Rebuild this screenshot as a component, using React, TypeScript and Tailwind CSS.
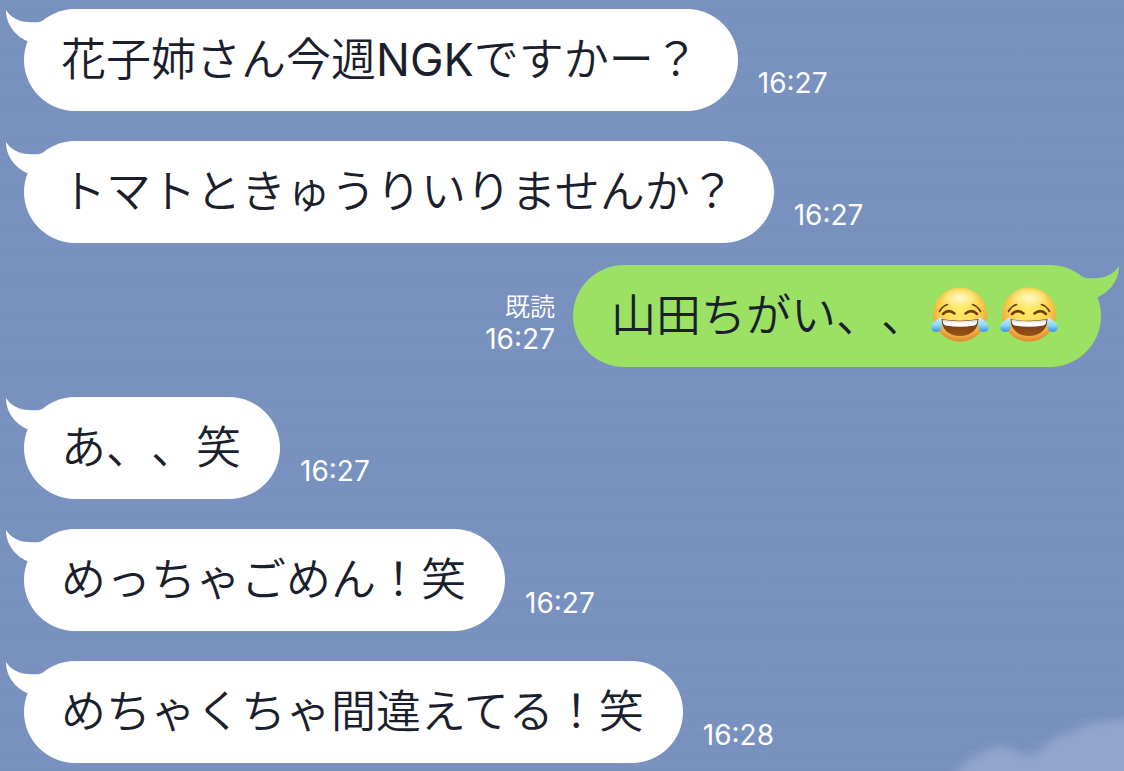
import type { ReactNode } from 'react';

function Tail({ side }: { side: 'left' | 'right' }) {
  return (
    <svg
      aria-hidden="true"
      viewBox="0 0 40 40"
      className={
        side === 'left'
          ? 'absolute top-0 -left-[18px] size-10 fill-white'
          : 'absolute top-0 -right-[18px] size-10 -scale-x-100 fill-[#9be164]'
      }
    >
      <path d="M0 1C5 9 14 13.500 27 13.200Q34 13.500 36 12L40 32H21C10 27 0 16 0 1Z" />
    </svg>
  );
}

function JoyEmoji({ id }: { id: string }) {
  return (
    <svg role="img" aria-label="😂" viewBox="0 0 58 58" className="size-[58px] shrink-0">
      <defs>
        <radialGradient id={`${id}-face`} cx="0.5" cy="0.38" r="0.64">
          <stop offset="0" stopColor="#feec68" />
          <stop offset="0.5" stopColor="#fcdb55" />
          <stop offset="0.8" stopColor="#f3ae40" />
          <stop offset="1" stopColor="#de7d2a" />
        </radialGradient>
        <radialGradient id={`${id}-shine`} cx="0.5" cy="0.5" r="0.5">
          <stop offset="0" stopColor="#fffbd0" stopOpacity="0.95" />
          <stop offset="1" stopColor="#fffbd0" stopOpacity="0" />
        </radialGradient>
        <linearGradient id={`${id}-mouth`} x1="0" y1="0" x2="0" y2="1">
          <stop offset="0" stopColor="#6b3410" />
          <stop offset="1" stopColor="#965418" />
        </linearGradient>
        <linearGradient id={`${id}-teeth`} x1="0" y1="0" x2="0" y2="1">
          <stop offset="0" stopColor="#c8c0ba" />
          <stop offset="0.5" stopColor="#ffffff" />
        </linearGradient>
        <linearGradient id={`${id}-tear`} x1="0" y1="0" x2="0" y2="1">
          <stop offset="0" stopColor="#d3f3ff" />
          <stop offset="0.55" stopColor="#8fd6fb" />
          <stop offset="1" stopColor="#2f93e6" />
        </linearGradient>
      </defs>
      <circle cx="29" cy="27.500" r="27" fill={`url(#${id}-face)`} />
      <ellipse cx="29" cy="11" rx="19" ry="10" fill={`url(#${id}-shine)`} />
      <g fill="none" stroke="#6e3b0c" strokeLinecap="round">
        <path d="M8.500 24.500Q11.500 19 16.500 17.500" strokeWidth="1.600" />
        <path d="M49.500 24.500Q46.500 19 41.500 17.500" strokeWidth="1.600" />
        <path d="M12 27Q17.500 21.500 23.500 26.500" strokeWidth="2.500" />
        <path d="M34.500 26.500Q40.500 21.500 46 27" strokeWidth="2.500" />
      </g>
      <path d="M10.500 32Q29 35.500 47.500 32C47.500 43 39 49 29 49S10.500 43 10.500 32Z" fill={`url(#${id}-mouth)`} />
      <path d="M11.500 32.500Q29 36 46.500 32.500Q46.500 37.500 43.500 38.500Q29 41 14.500 38.500Q11.500 37.500 11.500 32.500Z" fill={`url(#${id}-teeth)`} />
      <path d="M9.500 29.500C11.500 36 12 45 5.500 45C-1 45-.5 38.500 2.500 35.500C5 33 8 32 9.500 29.500Z" fill={`url(#${id}-tear)`} />
      <path d="M48.500 29.500C46.500 36 46 45 52.500 45C59 45 58.500 38.500 55.500 35.500C53 33 50 32 48.500 29.500Z" fill={`url(#${id}-tear)`} />
    </svg>
  );
}

function Time({ value }: { value: string }) {
  return <time className="block text-[28px] leading-8 font-normal">{value}</time>;
}

function Received({ time, children }: { time: string; children: ReactNode }) {
  return (
    <li className="flex items-end gap-5">
      <p className="relative rounded-[51px] bg-white py-[18px] pr-[39px] pl-[37px] text-[45px] leading-[66px] text-[#1b1f2d]">
        <Tail side="left" />
        <span className="relative">{children}</span>
      </p>
      <div className="shrink-0 pb-3 text-white">
        <Time value={time} />
      </div>
    </li>
  );
}

function Sent({ time, children }: { time: string; children: ReactNode }) {
  return (
    <li className="-mt-2 flex items-end justify-end gap-[18px]">
      <div className="shrink-0 pb-3 text-right text-white">
        <span className="block text-[25px] leading-8">既読</span>
        <Time value={time} />
      </div>
      <div className="relative flex items-center rounded-[51px] bg-[#9be164] px-[38px] py-[18px] text-[45px] leading-[66px] text-[#1b1f2d]">
        <Tail side="right" />
        {children}
      </div>
    </li>
  );
}

function Cloud() {
  return (
    <svg aria-hidden="true" viewBox="0 0 200 80" className="absolute right-0 bottom-0 h-20 w-[200px]">
      <defs>
        <filter id="cloud-soft" x="-10%" y="-20%" width="120%" height="140%">
          <feGaussianBlur stdDeviation="4" />
        </filter>
      </defs>
      <path
        d="M25 95Q38 68 58 63Q74 51 88 59Q104 68 116 61Q124 47 146 42Q166 30 184 31L225 24V95Z"
        fill="#92a6cc"
        filter="url(#cloud-soft)"
      />
    </svg>
  );
}

export default function App() {
  return (
    <main
      lang="ja"
      className="relative min-h-screen overflow-hidden bg-[#7891bf] bg-[repeating-linear-gradient(180deg,#7790be_0px,#7992c0_4px,#7891bf_7px,#7790be_11px)] pt-[9px] pr-[23px] pb-[7px] pl-6 font-['Inter','Noto_Sans_CJK_JP',sans-serif] font-[350] [text-spacing-trim:space-all]"
    >
      <Cloud />
      <ol className="relative flex flex-col gap-[30px]">
        <Received time="16:27">
          花子姉さん今週<span className="font-normal">NGK</span>ですかー？
        </Received>
        <Received time="16:27">トマトときゅうりいりませんか？</Received>
        <Sent time="16:27">
          <span>山田ちがい、、</span>
          <span className="flex gap-[11px] px-[5px]">
            <JoyEmoji id="joy-a" />
            <JoyEmoji id="joy-b" />
          </span>
        </Sent>
        <Received time="16:27">あ、、笑</Received>
        <Received time="16:27">めっちゃごめん！笑</Received>
        <Received time="16:28">めちゃくちゃ間違えてる！笑</Received>
      </ol>
    </main>
  );
}
